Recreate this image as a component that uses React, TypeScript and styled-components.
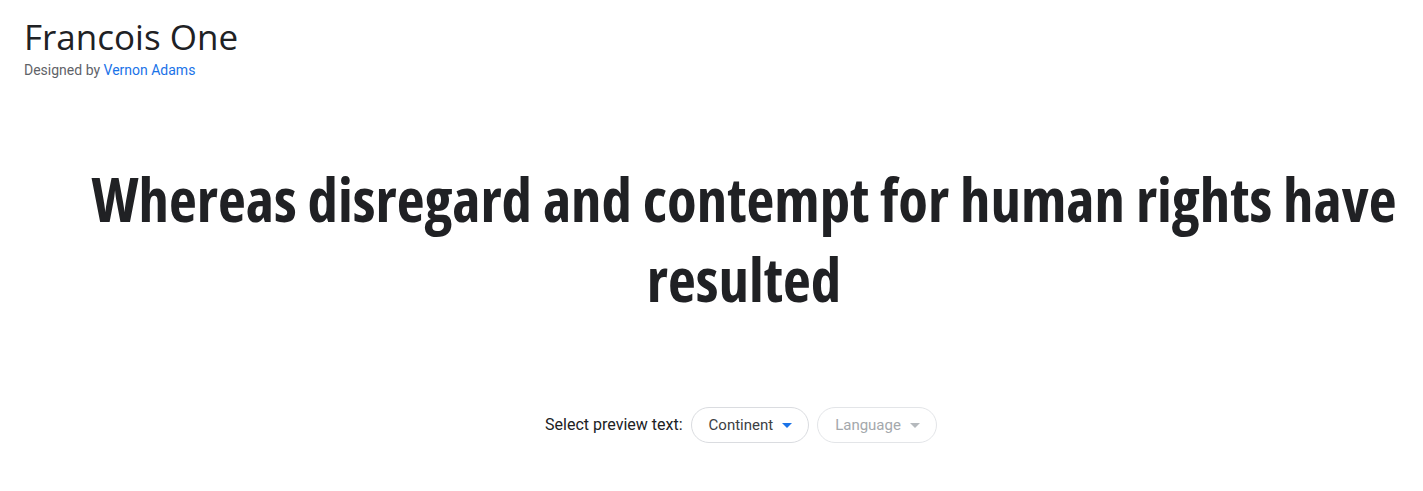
import React from "react";
import styled, { createGlobalStyle } from "styled-components";

const Global = createGlobalStyle`
  html, body { margin: 0; padding: 0; background: #ffffff; }
  body { font-family: Roboto, "Noto Sans", Arial, sans-serif; color: #202124; }
`;

const Page = styled.div`
  display: flex;
  flex-direction: column;
  width: 100%;
`;

const Header = styled.header`
  display: flex;
  flex-direction: column;
  padding: 17px 24px 0;
`;

const Title = styled.h1`
  margin: 0;
  font-family: "Open Sans", Roboto, sans-serif;
  font-weight: 400;
  font-size: 35px;
  line-height: 40px;
  color: #202124;
`;

const Byline = styled.div`
  margin-top: 3px;
  font-size: 14px;
  line-height: 20px;
  color: #5f6368;
`;

const DesignerLink = styled.a`
  color: #1a73e8;
  text-decoration: none;
`;

const Preview = styled.section`
  display: flex;
  flex-direction: column;
  align-items: center;
  padding-left: 65px;
  margin-top: 79px;
`;

const Sample = styled.p`
  margin: 0;
  width: 100%;
  text-align: center;
  font-family: "Open Sans", "Noto Sans", sans-serif;
  font-stretch: 75%;
  font-weight: 700;
  font-size: 60.8px;
  line-height: 80px;
  color: #202124;
`;

const Controls = styled.div`
  display: flex;
  align-items: center;
  justify-content: center;
  gap: 8px;
  margin-top: 88px;
  padding-right: 6px;
`;

const Label = styled.span`
  font-size: 16px;
  line-height: 20px;
  color: #202124;
`;

const Pill = styled.button<{ $disabled?: boolean }>`
  display: flex;
  align-items: center;
  gap: 9px;
  height: 36px;
  box-sizing: border-box;
  padding: 0 16px 0 17px;
  border-radius: 18px;
  background: #ffffff;
  border: 1px solid ${(p) => (p.$disabled ? "#e3e5e8" : "#dadce0")};
  font-family: Roboto, "Noto Sans", sans-serif;
  font-size: 15px;
  font-weight: 400;
  color: ${(p) => (p.$disabled ? "#a4a8ac" : "#3c4043")};
  cursor: ${(p) => (p.$disabled ? "default" : "pointer")};
`;

const Caret = styled.svg`
  display: block;
  width: 10px;
  height: 5px;
`;

function Arrow({ color }: { color: string }) {
  return (
    <Caret viewBox="0 0 10 5" aria-hidden>
      <path d="M0 0 L10 0 L5 5 Z" fill={color} />
    </Caret>
  );
}

export default function App() {
  return (
    <Page>
      <Global />
      <Header>
        <Title>Francois One</Title>
        <Byline>
          Designed by <DesignerLink href="#">Vernon Adams</DesignerLink>
        </Byline>
      </Header>
      <Preview>
        <Sample>Whereas disregard and contempt for human rights have resulted</Sample>
        <Controls>
          <Label>Select preview text:</Label>
          <Pill type="button">
            Continent
            <Arrow color="#1a73e8" />
          </Pill>
          <Pill type="button" $disabled disabled>
            Language
            <Arrow color="#b5b9bd" />
          </Pill>
        </Controls>
      </Preview>
    </Page>
  );
}
